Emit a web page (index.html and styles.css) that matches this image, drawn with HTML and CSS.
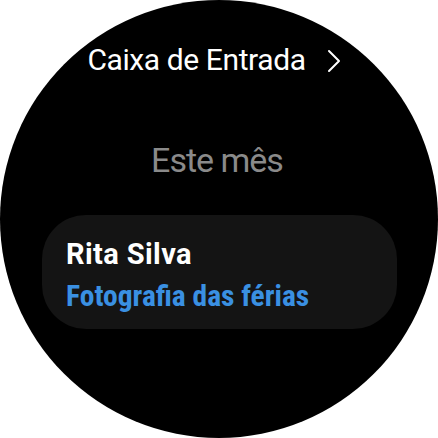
FILE: index.html
```html
<!DOCTYPE html>
<html lang="pt">
<head>
<meta charset="utf-8">
<link rel="stylesheet" href="styles.css">
</head>
<body>
<div class="watch">
  <div class="title-row">
    <span class="title">Caixa de Entrada</span>
    <svg class="chevron" width="14" height="24" viewBox="0 0 14 24"><polyline points="2,2 12,12 2,22" fill="none" stroke="#ffffff" stroke-width="2" stroke-linecap="round" stroke-linejoin="round"/></svg>
  </div>
  <div class="section">Este mês</div>
  <div class="card">
    <div class="sender">Rita Silva</div>
    <div class="subject">Fotografia das férias</div>
  </div>
</div>
</body>
</html>
```
FILE: styles.css
```css
html, body {
  margin: 0;
  padding: 0;
  background: #ffffff;
}
body {
  font-family: Roboto, "Liberation Sans", sans-serif;
}
.watch {
  width: 438px;
  height: 438px;
  border-radius: 50%;
  background: #000000;
  overflow: hidden;
  display: flex;
  flex-direction: column;
  align-items: center;
}
.title-row {
  margin-top: 42px;
  display: flex;
  align-items: center;
  gap: 21px;
  margin-right: 10px;
}
.title {
  color: #ffffff;
  font-size: 30px;
  line-height: 36px;
  letter-spacing: -0.4px;
}
.chevron {
  display: block;
  margin-top: 2px;
}
.section {
  margin-top: 62px;
  color: #8a8a8a;
  font-size: 34px;
  line-height: 40px;
  letter-spacing: -1px;
  margin-right: 4px;
}
.card {
  margin-top: 35px;
  width: 355px;
  box-sizing: border-box;
  padding: 18px 24px 12px;
  background: #141414;
  border-radius: 44px;
  margin-left: 1px;
}
.sender {
  color: #ffffff;
  font-size: 29px;
  line-height: 42px;
  font-weight: 700;
  letter-spacing: 0.4px;
}
.subject {
  color: #3a90e2;
  font-size: 29.5px;
  line-height: 42px;
  font-weight: 700;
  font-stretch: semi-condensed;
}
```
